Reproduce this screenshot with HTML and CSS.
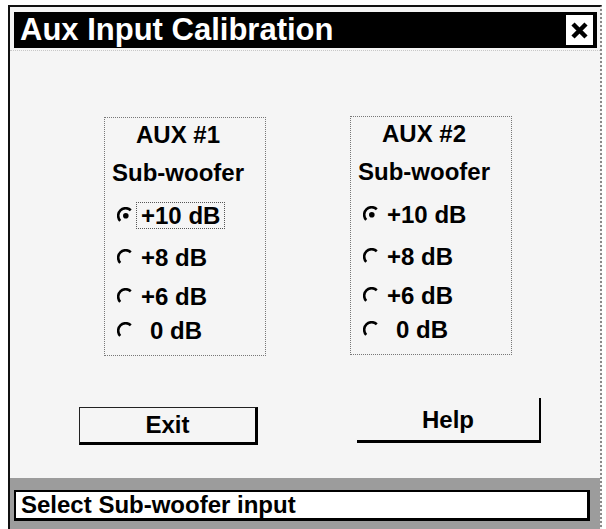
FILE: index.html
```html
<!DOCTYPE html>
<html>
<head>
<meta charset="utf-8">
<link rel="stylesheet" href="styles.css">
</head>
<body>
<div class="window">
  <div class="titlebar">
    <span class="title">Aux Input Calibration</span>
    <span class="close"><svg width="21" height="19" viewBox="0 0 21 19"><path d="M4 3 L17 16 M17 3 L4 16" stroke="#000" stroke-width="4.5" fill="none"/></svg></span>
  </div>
  <div class="content">
    <div class="groups">
      <div class="group g1">
        <div class="head">AUX #1</div>
        <div class="head sub">Sub-woofer</div>
        <div class="opt r3"><svg class="radio" width="17" height="17" viewBox="0 0 17 17"><path d="M3.2 13.8 A7.5 7.5 0 0 1 13.8 3.2" stroke="#000" stroke-width="2.6" fill="none"/><circle cx="8.8" cy="8.8" r="2.8" fill="#000"/></svg><span class="lbl focus">+10 dB</span></div>
        <div class="opt r4"><svg class="radio" width="17" height="17" viewBox="0 0 17 17"><path d="M3.2 13.8 A7.5 7.5 0 0 1 13.8 3.2" stroke="#000" stroke-width="2.6" fill="none"/></svg><span class="lbl">+8 dB</span></div>
        <div class="opt r5"><svg class="radio" width="17" height="17" viewBox="0 0 17 17"><path d="M3.2 13.8 A7.5 7.5 0 0 1 13.8 3.2" stroke="#000" stroke-width="2.6" fill="none"/></svg><span class="lbl">+6 dB</span></div>
        <div class="opt r6"><svg class="radio" width="17" height="17" viewBox="0 0 17 17"><path d="M3.2 13.8 A7.5 7.5 0 0 1 13.8 3.2" stroke="#000" stroke-width="2.6" fill="none"/></svg><span class="lbl zero">0 dB</span></div>
      </div>
      <div class="group g2">
        <div class="head">AUX #2</div>
        <div class="head sub">Sub-woofer</div>
        <div class="opt r3"><svg class="radio" width="17" height="17" viewBox="0 0 17 17"><path d="M3.2 13.8 A7.5 7.5 0 0 1 13.8 3.2" stroke="#000" stroke-width="2.6" fill="none"/><circle cx="8.8" cy="8.8" r="2.8" fill="#000"/></svg><span class="lbl">+10 dB</span></div>
        <div class="opt r4"><svg class="radio" width="17" height="17" viewBox="0 0 17 17"><path d="M3.2 13.8 A7.5 7.5 0 0 1 13.8 3.2" stroke="#000" stroke-width="2.6" fill="none"/></svg><span class="lbl">+8 dB</span></div>
        <div class="opt r5"><svg class="radio" width="17" height="17" viewBox="0 0 17 17"><path d="M3.2 13.8 A7.5 7.5 0 0 1 13.8 3.2" stroke="#000" stroke-width="2.6" fill="none"/></svg><span class="lbl">+6 dB</span></div>
        <div class="opt r6"><svg class="radio" width="17" height="17" viewBox="0 0 17 17"><path d="M3.2 13.8 A7.5 7.5 0 0 1 13.8 3.2" stroke="#000" stroke-width="2.6" fill="none"/></svg><span class="lbl zero">0 dB</span></div>
      </div>
    </div>
    <div class="buttons">
      <div class="btn exit">Exit</div>
      <div class="btn help">Help</div>
    </div>
  </div>
  <div class="status">
    <div class="statusbox">Select Sub-woofer input</div>
  </div>
</div>
</body>
</html>
```
FILE: styles.css
```css
html, body {
  margin: 0;
  padding: 0;
  background: #ffffff;
  height: 529px;
  overflow: hidden;
}
body {
  font-family: "Liberation Sans", Arial, sans-serif;
  color: #000;
}
.window {
  margin: 5px 0 0 8px;
  width: 590px;
  height: 524px;
  border-top: 2px solid #111;
  border-left: 2px solid #111;
  border-right: 2px dotted #8a8a8a;
  background: #f5f5f5;
  display: flex;
  flex-direction: column;
}
.titlebar {
  margin: 5px 3px 0 4px;
  height: 36px;
  background: #000;
  display: flex;
  align-items: center;
  justify-content: space-between;
  padding: 0 4px 0 6px;
}
.title {
  color: #fff;
  font-weight: bold;
  font-size: 31px;
  line-height: 36px;
}
.close {
  width: 27px;
  height: 30px;
  background: #fff;
  display: flex;
  align-items: center;
  justify-content: center;
}
.content {
  flex: 1;
  border-top: 1px dotted #c8c8c8;
  margin-top: 2px;
}
.groups {
  display: flex;
  gap: 84px;
  margin: 66px 0 0 94px;
}
.group {
  width: 160px;
  height: 237px;
  border: 1px dotted #777;
  font-weight: bold;
  font-size: 24px;
  display: flex;
  flex-direction: column;
}
.g2 {
  margin-top: -1px;
}
.head {
  height: 34px;
  display: flex;
  align-items: center;
  justify-content: center;
  padding-right: 14px;
}
.head.sub {
  height: 42px;
}
.opt {
  display: flex;
  align-items: center;
  padding-left: 12px;
}
.r3 { height: 42px; }
.r4 { height: 42px; }
.r5 { height: 36px; }
.r6 { height: 32px; }
.radio {
  flex: none;
}
.lbl {
  margin-left: 2px;
  padding: 0 4px;
  border: 1px dotted transparent;
  line-height: 25px;
}
.lbl.focus {
  border-color: #555;
}
.lbl.zero {
  padding-left: 13px;
}
.buttons {
  display: flex;
  align-items: flex-start;
  margin: 42px 0 0 69px;
  gap: 99px;
}
.btn {
  font-weight: bold;
  font-size: 24px;
  display: flex;
  align-items: center;
  justify-content: center;
  box-sizing: border-box;
}
.exit {
  margin-top: 9px;
  width: 179px;
  height: 38px;
  border-top: 1px solid #222;
  border-left: 1px solid #222;
  border-right: 3px solid #000;
  border-bottom: 3px solid #000;
}
.help {
  width: 184px;
  height: 45px;
  border-right: 2px solid #000;
  border-bottom: 3px solid #000;
  padding-top: 2px;
}
.status {
  margin-top: 31px;
  height: 53px;
  background: #9c9c9c;
  padding: 12px 10px 0 4px;
  box-sizing: border-box;
}
.statusbox {
  height: 31px;
  background: #fff;
  border: 2px solid #000;
  border-right-width: 3px;
  border-bottom-width: 3px;
  box-sizing: border-box;
  font-size: 24px;
  font-weight: bold;
  line-height: 26px;
  padding-left: 5px;
}
```
